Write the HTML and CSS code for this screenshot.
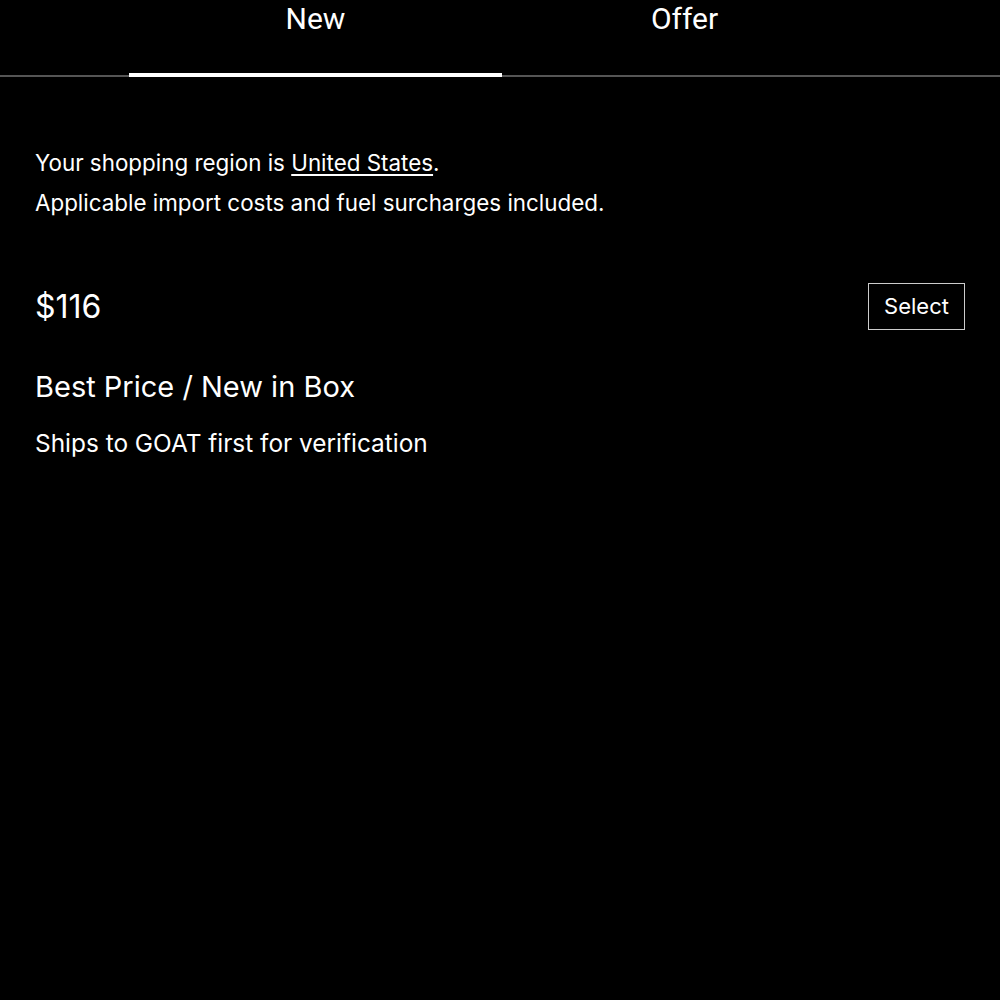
FILE: index.html
```html
<!DOCTYPE html>
<html>
<head>
<meta charset="utf-8">
<link rel="stylesheet" href="styles.css">
</head>
<body>
<div class="tabs">
  <div class="tab active">New</div>
  <div class="tab">Offer</div>
</div>
<div class="content">
  <p class="region">Your shopping region is <a href="#">United States</a>.</p>
  <p class="region">Applicable import costs and fuel surcharges included.</p>
  <div class="offer">
    <div class="price-row">
      <div class="price">$116</div>
      <button class="select">Select</button>
    </div>
    <div class="title">Best Price / New in Box</div>
    <div class="note">Ships to GOAT first for verification</div>
  </div>
</div>
</body>
</html>
```

FILE: styles.css
```css
html, body {
  margin: 0;
  padding: 0;
  background: #000;
  color: #fff;
  font-family: Inter, "Noto Sans", sans-serif;
}
.tabs {
  display: flex;
  padding-left: 129px;
  height: 75px;
  border-bottom: 2px solid #555;
  box-sizing: content-box;
}
.tab {
  width: 373px;
  text-align: center;
  font-family: Roboto, sans-serif;
  font-size: 30px;
  line-height: 38px;
  margin-bottom: -2px;
  border-bottom: 4px solid transparent;
}
.tab + .tab { width: 365px; }
.tab.active { border-bottom-color: #fff; }
.content {
  padding: 0 35px;
  padding-top: 66px;
}
.region {
  margin: 0;
  font-size: 22.4px;
  line-height: 40px;
}
.region a { color: #fff; text-decoration: underline; text-underline-offset: 3px; }
.offer { margin-top: 59px; }
.price-row {
  display: flex;
  justify-content: space-between;
  align-items: center;
  height: 48px;
}
.price { font-size: 32px; }
.select {
  background: #000;
  color: #fff;
  border: 1px solid #ccc;
  font-family: inherit;
  font-size: 22px;
  width: 97px;
  height: 47px;
  padding: 0;
}
.title { font-size: 29px; margin-top: 39px; }
.note { font-size: 24.4px; margin-top: 24px; }
```
